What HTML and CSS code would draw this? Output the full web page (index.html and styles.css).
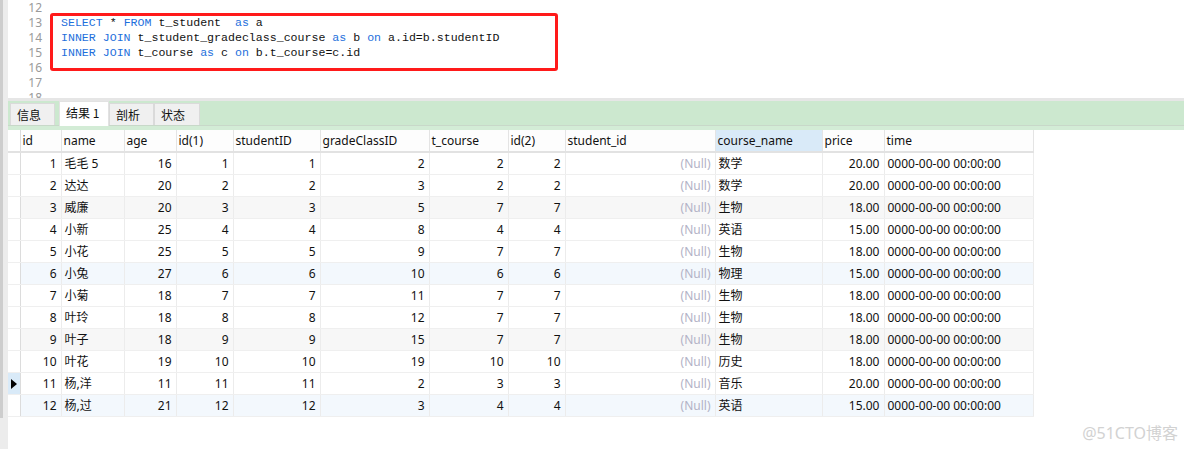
FILE: index.html
```html
<!DOCTYPE html>
<html lang="zh">
<head>
<meta charset="utf-8">
<title>Query</title>
<link rel="stylesheet" href="styles.css">
</head>
<body>
<div class="app">
  <div class="leftbar"><div class="leftbar-thumb"></div></div>
  <div class="main">
    <div class="editor">
      <div class="line"><span class="ln">12</span><span class="code"></span></div>
      <div class="line"><span class="ln">13</span><span class="code"><span class="kw">SELECT</span> * <span class="kw">FROM</span> t_student  <span class="kw">as</span> a</span></div>
      <div class="line"><span class="ln">14</span><span class="code"><span class="kw">INNER JOIN</span> t_student_gradeclass_course <span class="kw">as</span> b <span class="kw">on</span> a.id=b.studentID</span></div>
      <div class="line"><span class="ln">15</span><span class="code"><span class="kw">INNER JOIN</span> t_course <span class="kw">as</span> c <span class="kw">on</span> b.t_course=c.id</span></div>
      <div class="line"><span class="ln">16</span><span class="code"></span></div>
      <div class="line"><span class="ln">17</span><span class="code"></span></div>
      <div class="line"><span class="ln">18</span><span class="code"></span></div>
      <div class="highlight-box"></div>
    </div>
    <div class="divider"></div>
    <div class="tabbar">
      <div class="tabs">
        <div class="tab">信息</div>
        <div class="tab active">结果 1</div>
        <div class="tab">剖析</div>
        <div class="tab">状态</div>
      </div>
      <div class="tabbar-base"></div>
    </div>
    <div class="grid-area">
      <table class="grid">
        <colgroup>
          <col class="c-ind"><col class="c-id"><col class="c-name"><col class="c-age"><col class="c-id1"><col class="c-sid"><col class="c-gc"><col class="c-tc"><col class="c-id2"><col class="c-stid"><col class="c-cn"><col class="c-price"><col class="c-time">
        </colgroup>
        <thead>
          <tr><th class="ind"></th><th>id</th><th>name</th><th>age</th><th>id(1)</th><th>studentID</th><th>gradeClassID</th><th>t_course</th><th>id(2)</th><th>student_id</th><th class="sel">course_name</th><th>price</th><th>time</th></tr>
        </thead>
        <tbody>
          <tr><td class="ind"></td><td class="n">1</td><td>毛毛 5</td><td class="n">16</td><td class="n">1</td><td class="n">1</td><td class="n">2</td><td class="n">2</td><td class="n">2</td><td class="n null">(Null)</td><td>数学</td><td class="n">20.00</td><td>0000-00-00 00:00:00</td></tr>
          <tr><td class="ind"></td><td class="n">2</td><td>达达</td><td class="n">20</td><td class="n">2</td><td class="n">2</td><td class="n">3</td><td class="n">2</td><td class="n">2</td><td class="n null">(Null)</td><td>数学</td><td class="n">20.00</td><td>0000-00-00 00:00:00</td></tr>
          <tr class="alt-g"><td class="ind"></td><td class="n">3</td><td>威廉</td><td class="n">20</td><td class="n">3</td><td class="n">3</td><td class="n">5</td><td class="n">7</td><td class="n">7</td><td class="n null">(Null)</td><td>生物</td><td class="n">18.00</td><td>0000-00-00 00:00:00</td></tr>
          <tr><td class="ind"></td><td class="n">4</td><td>小新</td><td class="n">25</td><td class="n">4</td><td class="n">4</td><td class="n">8</td><td class="n">4</td><td class="n">4</td><td class="n null">(Null)</td><td>英语</td><td class="n">15.00</td><td>0000-00-00 00:00:00</td></tr>
          <tr><td class="ind"></td><td class="n">5</td><td>小花</td><td class="n">25</td><td class="n">5</td><td class="n">5</td><td class="n">9</td><td class="n">7</td><td class="n">7</td><td class="n null">(Null)</td><td>生物</td><td class="n">18.00</td><td>0000-00-00 00:00:00</td></tr>
          <tr class="alt-b"><td class="ind"></td><td class="n">6</td><td>小兔</td><td class="n">27</td><td class="n">6</td><td class="n">6</td><td class="n">10</td><td class="n">6</td><td class="n">6</td><td class="n null">(Null)</td><td>物理</td><td class="n">15.00</td><td>0000-00-00 00:00:00</td></tr>
          <tr><td class="ind"></td><td class="n">7</td><td>小菊</td><td class="n">18</td><td class="n">7</td><td class="n">7</td><td class="n">11</td><td class="n">7</td><td class="n">7</td><td class="n null">(Null)</td><td>生物</td><td class="n">18.00</td><td>0000-00-00 00:00:00</td></tr>
          <tr><td class="ind"></td><td class="n">8</td><td>叶玲</td><td class="n">18</td><td class="n">8</td><td class="n">8</td><td class="n">12</td><td class="n">7</td><td class="n">7</td><td class="n null">(Null)</td><td>生物</td><td class="n">18.00</td><td>0000-00-00 00:00:00</td></tr>
          <tr class="alt-g"><td class="ind"></td><td class="n">9</td><td>叶子</td><td class="n">18</td><td class="n">9</td><td class="n">9</td><td class="n">15</td><td class="n">7</td><td class="n">7</td><td class="n null">(Null)</td><td>生物</td><td class="n">18.00</td><td>0000-00-00 00:00:00</td></tr>
          <tr><td class="ind"></td><td class="n">10</td><td>叶花</td><td class="n">19</td><td class="n">10</td><td class="n">10</td><td class="n">19</td><td class="n">10</td><td class="n">10</td><td class="n null">(Null)</td><td>历史</td><td class="n">18.00</td><td>0000-00-00 00:00:00</td></tr>
          <tr><td class="ind cur"><span class="arrow"></span></td><td class="n">11</td><td>杨,洋</td><td class="n">11</td><td class="n">11</td><td class="n">11</td><td class="n">2</td><td class="n">3</td><td class="n">3</td><td class="n null">(Null)</td><td>音乐</td><td class="n">20.00</td><td>0000-00-00 00:00:00</td></tr>
          <tr class="alt-b"><td class="ind"></td><td class="n">12</td><td>杨,过</td><td class="n">21</td><td class="n">12</td><td class="n">12</td><td class="n">3</td><td class="n">4</td><td class="n">4</td><td class="n null">(Null)</td><td>英语</td><td class="n">15.00</td><td>0000-00-00 00:00:00</td></tr>
        </tbody>
      </table>
      <div class="watermark">@51CTO博客</div>
    </div>
  </div>
</div>
</body>
</html>
```
FILE: styles.css
```css
* { box-sizing: border-box; }
html, body { margin: 0; padding: 0; }
body {
  width: 1184px;
  height: 449px;
  overflow: hidden;
  background: #ffffff;
  font-family: "Noto Sans", "Noto Sans CJK SC", sans-serif;
  font-size: 12px;
  color: #111;
}
.app {
  display: flex;
  height: 449px;
}
.leftbar {
  width: 8px;
  flex: none;
  background: #ececec;
}
.leftbar-thumb {
  width: 3px;
  height: 418px;
  background: #cdcdcd;
}
.main {
  flex: 1;
  display: flex;
  flex-direction: column;
  min-width: 0;
}
.editor {
  position: relative;
  height: 98px;
  overflow: hidden;
  background: #fff;
  font-family: "Liberation Mono", "DejaVu Sans Mono", monospace;
  font-size: 11.6px;
}
.line {
  display: flex;
  height: 15px;
  line-height: 15px;
  white-space: pre;
}
.ln {
  width: 34px;
  text-align: right;
  color: #9a9a9a;
  font-family: "Noto Sans", sans-serif;
  font-size: 12px;
}
.code {
  padding-left: 19px;
  color: #111;
}
.kw { color: #1e6fdc; }
.highlight-box {
  position: absolute;
  left: 42px;
  top: 13px;
  width: 508px;
  height: 58px;
  border: 3px solid #ff1a1a;
  border-radius: 3px;
}
.divider {
  height: 3px;
  background: #e6e6e6;
}
.tabbar {
  background: #cce8cf;
}
.tabs {
  display: flex;
  align-items: flex-end;
  height: 24px;
  padding-left: 2px;
}
.tab {
  height: 22px;
  line-height: 21px;
  padding: 0 0 0 6px;
  background: #f0f0f0;
  border: 1px solid #dadada;
  border-bottom: none;
  font-family: "Noto Sans CJK SC", sans-serif;
  font-size: 12px;
  color: #111;
}
.tab:nth-child(1) { width: 45px; margin-right: 4px; }
.tab:nth-child(2) { width: 50px; }
.tab:nth-child(3) { width: 45px; }
.tab:nth-child(4) { width: 46px; }
.tab.active {
  height: 25px;
  margin-bottom: -1px;
  background: #ffffff;
  border-color: #e2e2e2;
  position: relative;
  z-index: 1;
}
.tabbar-base {
  height: 5px;
  border-top: 1px solid #c8d8c9;
  background: #d3ecd6;
}
.grid-area {
  position: relative;
  flex: 1;
  background: #fff;
}
.grid {
  table-layout: fixed;
  border-collapse: collapse;
  width: 1025px;
}
.c-ind { width: 12px; }
.c-id { width: 41px; }
.c-name { width: 63px; }
.c-age { width: 52px; }
.c-id1 { width: 57px; }
.c-sid { width: 87px; }
.c-gc { width: 109px; }
.c-tc { width: 79px; }
.c-id2 { width: 57px; }
.c-stid { width: 150px; }
.c-cn { width: 107px; }
.c-price { width: 62px; }
.c-time { width: 149px; }
.grid th, .grid td {
  height: 22px;
  padding: 1px 4px 0 3px;
  white-space: nowrap;
  overflow: hidden;
  font-weight: normal;
  text-align: left;
  border-right: 1px solid #ececec;
  border-bottom: 1px solid #efefef;
  line-height: 20px;
}
.grid th {
  background: #fdfdfd;
  border-right: 1px solid #e4e4e4;
  border-bottom: 2px solid #e2e2e2;
  padding-left: 2px;
}
.grid th.sel { background: #d9eaf8; }
.grid td.n { text-align: right; }
.grid td.null { color: #b2b2c6; }
.grid .ind { padding: 0; border-right: 1px solid #dcdcdc; background: #fff; }
.grid tr.alt-g td { background: #f7f7f7; }
.grid tr.alt-b td { background: #f3f8fd; }
.grid tr.alt-g td.ind, .grid tr.alt-b td.ind { background: #fff; }
.grid td.ind.cur { background: #d9eaf8; position: relative; }
.arrow {
  position: absolute;
  left: 3px;
  top: 6px;
  width: 0;
  height: 0;
  border-top: 5px solid transparent;
  border-bottom: 5px solid transparent;
  border-left: 6px solid #000;
}
.watermark {
  position: absolute;
  right: 6px;
  bottom: 5px;
  font-family: "Noto Sans", "Noto Sans CJK SC", sans-serif;
  font-size: 16px;
  color: #d2d2d2;
}
```
